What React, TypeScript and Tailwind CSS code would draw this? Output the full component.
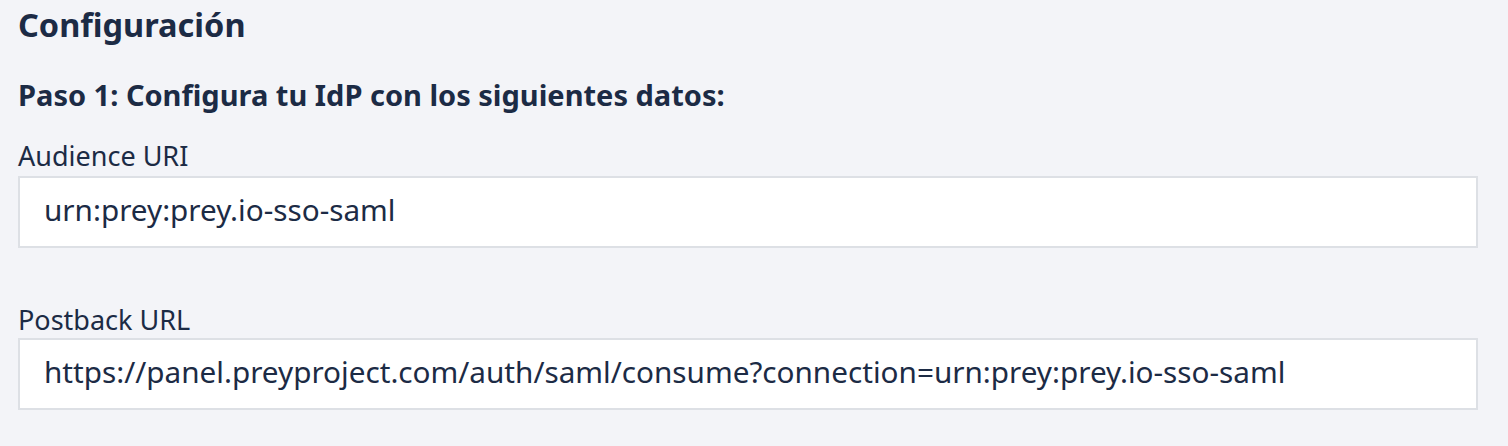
export default function App() {
  const font = { fontFamily: '"Noto Sans", "Open Sans", sans-serif' };
  return (
    <div className="min-h-screen w-full bg-[#f3f4f8] pl-[18px] pr-[30px] text-[#1c2b45]" style={font}>
      <h1 className="pt-[5px] text-[32.5px] font-bold leading-[40px]">Configuración</h1>
      <h2 className="mt-[32px] text-[29px] font-bold leading-[36px]">Paso 1: Configura tu IdP con los siguientes datos:</h2>
      <div className="mt-[27px]">
        <label className="block text-[27px] leading-[32px]">Audience URI</label>
        <div className="mt-[4px] flex h-[72px] items-center border-2 border-[#dde0e5] bg-white pb-[4px] pl-[24px] text-[29.7px] leading-[36px]">
          urn:prey:prey.io-sso-saml
        </div>
      </div>
      <div className="mt-[56px]">
        <label className="block text-[27px] leading-[32px]">Postback URL</label>
        <div className="mt-[2px] flex h-[72px] items-center border-2 border-[#dde0e5] bg-white pb-[4px] pl-[24px] text-[29.7px] leading-[36px]">
          https://panel.preyproject.com/auth/saml/consume?connection=urn:prey:prey.io-sso-saml
        </div>
      </div>
    </div>
  );
}
